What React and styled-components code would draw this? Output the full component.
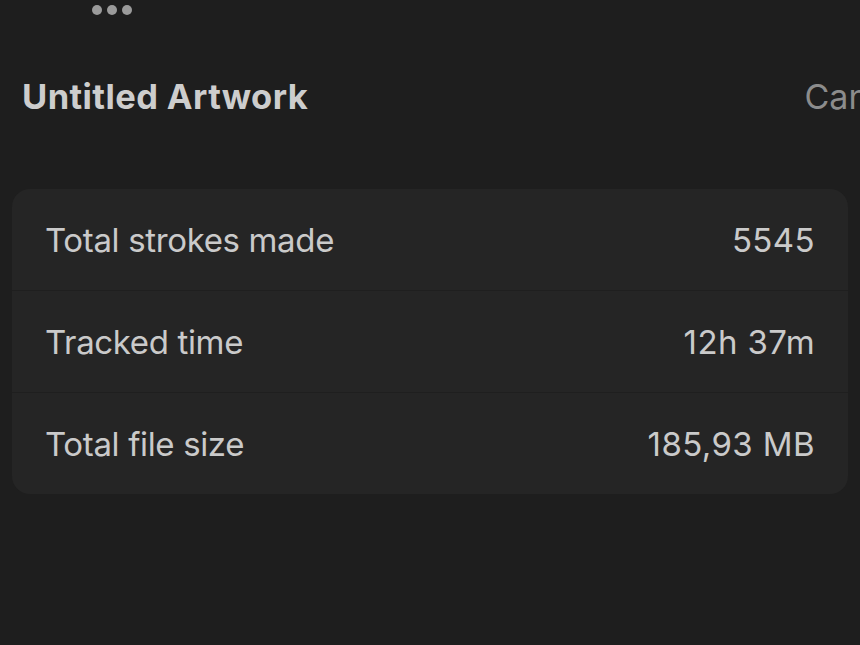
import React from "react";
import styled, { createGlobalStyle } from "styled-components";

const GlobalStyle = createGlobalStyle`
  html, body {
    margin: 0;
    padding: 0;
    background: #1e1e1e;
    overflow: hidden;
  }
  body {
    font-family: Inter, "Noto Sans", sans-serif;
    -webkit-font-smoothing: antialiased;
  }
`;

const stats = [
  { label: "Total strokes made", value: "5545" },
  { label: "Tracked time", value: "12h 37m" },
  { label: "Total file size", value: "185,93 MB" },
];

function App() {
  return (
    <Page>
      <GlobalStyle />
      <Grabber>
        <Dot />
        <Dot />
        <Dot />
      </Grabber>
      <Header>
        <Title>Untitled Artwork</Title>
        <Cancel>Cancel</Cancel>
      </Header>
      <Card>
        {stats.map((s) => (
          <Row key={s.label}>
            <Label>{s.label}</Label>
            <Value>{s.value}</Value>
          </Row>
        ))}
      </Card>
    </Page>
  );
}

const Page = styled.div`
  width: 860px;
  height: 645px;
  background: #1e1e1e;
  overflow: hidden;
  display: flex;
  flex-direction: column;
`;

const Grabber = styled.div`
  display: flex;
  gap: 5px;
  padding-left: 92px;
  margin-top: 5px;
  height: 10px;
`;

const Dot = styled.span`
  width: 10px;
  height: 10px;
  border-radius: 50%;
  background: #9b9b9b;
`;

const Header = styled.div`
  display: flex;
  justify-content: space-between;
  align-items: baseline;
  padding-left: 22px;
  margin-top: 61px;
  white-space: nowrap;
`;

const Title = styled.h1`
  margin: 0;
  font-size: 34.5px;
  font-weight: 700;
  color: #cdcdcd;
  letter-spacing: 0.4px;
`;

const Cancel = styled.span`
  font-size: 34px;
  color: #8c8c8c;
  margin-right: -56px;
`;

const Card = styled.div`
  margin: 72px 12px 0;
  background: #252525;
  border-radius: 18px;
  overflow: hidden;
`;

const Row = styled.div`
  display: flex;
  justify-content: space-between;
  align-items: center;
  height: 101px;
  padding: 0 33px;
  & + & {
    border-top: 1.5px solid #1f1f1f;
  }
`;

const Label = styled.span`
  font-size: 33px;
  color: #cacaca;
  letter-spacing: -0.35px;
`;

const Value = styled.span`
  font-size: 33px;
  color: #cacaca;
  letter-spacing: 0.4px;
`;

export default App;
